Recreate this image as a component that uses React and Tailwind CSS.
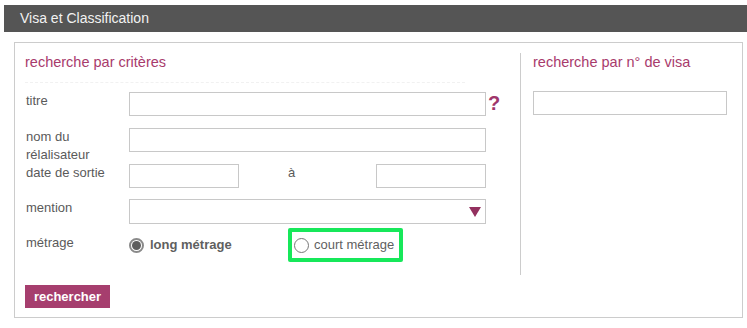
import React from 'react';

const FONT = "font-['Liberation_Sans',Arial,sans-serif]";

function Field({ className = '' }) {
  return (
    <input
      type="text"
      className={`h-[24px] border border-[#c8c8c8] bg-white outline-none ${className}`}
    />
  );
}

function Radio({ checked }) {
  if (checked) {
    return (
      <span className="flex h-[15px] w-[15px] items-center justify-center rounded-full border-2 border-[#8a8a8a] bg-white">
        <span className="h-[9px] w-[9px] rounded-full bg-[#5e5e5e]" />
      </span>
    );
  }
  return <span className="h-[15px] w-[15px] rounded-full border border-[#777] bg-white" />;
}

function Row({ label, height, children }) {
  return (
    <div className="flex items-start" style={{ height }}>
      <div className="w-[104px] shrink-0 pl-[1px] text-[13px] leading-[18px] text-[#5a5a5a]">{label}</div>
      <div className="flex items-start">{children}</div>
    </div>
  );
}

export default function App() {
  return (
    <div className={`${FONT} bg-white pt-[5px] pl-[4px]`}>
      {/* ── Title bar ── */}
      <div className="flex h-[27px] items-center bg-[#555555] pl-4 text-[14px] text-[#f2f2f2]">
        Visa et Classification
      </div>

      {/* ── Search box ── */}
      <div className="mt-[10px] ml-[10px] w-[729px] border border-[#cccccc] px-[10px] pt-[9px] pb-[9px]">
        <div className="flex h-[223px]">
          {/* Left: criteria */}
          <div className="w-[495px] shrink-0">
            <div className="h-[20px] text-[14.5px] leading-[20px] text-[#a83b6c]">recherche par critères</div>
            <div className="mt-[10px] w-[440px] border-t border-dashed border-[#f1f1f1]" />

            <div className="mt-[9px]">
              <Row label="titre" height={36}>
                <Field className="w-[357px]" />
                <span className="ml-[2px] mt-[-1px] text-[20px] leading-[24px] font-bold text-[#a0366b]">?</span>
              </Row>
              <Row label={<>nom du<br />rélalisateur</>} height={36}>
                <Field className="w-[357px]" />
              </Row>
              <Row label="date de sortie" height={35}>
                <Field className="w-[110px]" />
                <span className="ml-[49px] w-[88px] text-[13px] leading-[18px] text-[#5a5a5a]">à</span>
                <Field className="w-[110px]" />
              </Row>
              <Row label="mention" height={29}>
                <div className="relative h-[25px] w-[357px] border border-[#c8c8c8] bg-white">
                  <svg className="absolute top-[7px] right-[4px]" width="12" height="10" viewBox="0 0 12 10">
                    <polygon points="0,0 12,0 6,10" fill="#93315f" />
                  </svg>
                </div>
              </Row>
              <div className="flex h-[34px] items-center">
                <div className="w-[104px] shrink-0 pl-[1px] pb-[4px] text-[13px] leading-[18px] text-[#5a5a5a]">métrage</div>
                <div className="flex w-[159px] items-center gap-[6px]">
                  <Radio checked />
                  <span className="text-[13px] font-bold text-[#5f5f5f]">long métrage</span>
                </div>
                <div className="flex h-[34px] w-[115px] items-center gap-[5px] rounded-[2px] border-4 border-[#17e85a] pl-[2px]">
                  <Radio />
                  <span className="text-[13px] text-[#5f5f5f]">court métrage</span>
                </div>
              </div>
            </div>
          </div>

          {/* Divider */}
          <div className="mt-[1px] w-px shrink-0 bg-[#cccccc]" />

          {/* Right: visa number */}
          <div className="pl-[12px]">
            <div className="h-[20px] text-[14.5px] leading-[20px] text-[#a83b6c]">recherche par n° de visa</div>
            <Field className="mt-[19px] w-[194px]" />
          </div>
        </div>

        <button className="mt-[10px] flex h-[23px] w-[85px] items-center justify-center bg-[#a63e6e] text-[13px] font-bold text-white">
          rechercher
        </button>
      </div>
    </div>
  );
}
